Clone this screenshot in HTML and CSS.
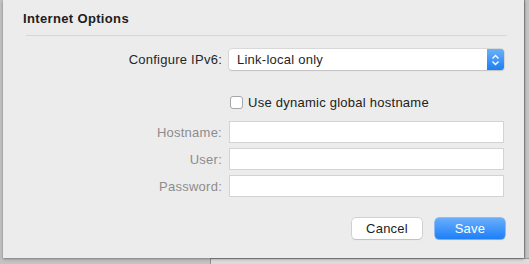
FILE: index.html
```html
<!DOCTYPE html>
<html lang="en">
  <head>
    <meta charset="UTF-8" />
    <meta name="viewport" content="width=device-width, initial-scale=1.0" />
    <title>Internet Options</title>
    <link rel="stylesheet" href="styles.css">
  </head>
  <body>
    <div class="sheet">
      <h1 class="title">Internet Options</h1>
      <div class="rule"></div>

      <div class="row first">
        <label class="label dark">Configure IPv6:</label>
        <div class="select">
          <span class="select-text">Link-local only</span>
          <span class="stepper">
            <svg width="9" height="12" viewBox="0 0 9 12">
              <path d="M1.5 4.5 L4.5 1.5 L7.5 4.5" fill="none" stroke="#fff" stroke-width="1.4" />
              <path d="M1.5 7.5 L4.5 10.5 L7.5 7.5" fill="none" stroke="#fff" stroke-width="1.4" />
            </svg>
          </span>
        </div>
      </div>

      <div class="row check-row">
        <span></span>
        <label class="check"><span class="box"></span>Use dynamic global hostname</label>
      </div>

      <div class="fields">
        <div class="row">
          <label class="label">Hostname:</label>
          <input class="field" type="text" />
        </div>
        <div class="row">
          <label class="label">User:</label>
          <input class="field" type="text" />
        </div>
        <div class="row">
          <label class="label">Password:</label>
          <input class="field" type="password" />
        </div>
      </div>

      <div class="buttons">
        <button class="btn" type="button">Cancel</button>
        <button class="btn primary" type="button">Save</button>
      </div>
    </div>
    <div class="behind"></div>
  </body>
</html>
```

FILE: styles.css
```css
* {
  padding: 0;
  margin: 0;
  box-sizing: border-box;
}
body {
  width: 529px;
  height: 264px;
  overflow: hidden;
  background: #c3c3c3;
  font-family: "Liberation Sans", Arial, sans-serif;
  font-size: 13px;
  letter-spacing: 0.25px;
  color: #222;
}

.sheet {
  width: 521px;
  height: 258px;
  margin-left: 3px;
  padding: 11px 19px 0 20px;
  background: #ececec;
  box-shadow: 0 1px 3px rgba(0, 0, 0, 0.35), 1px 0 1px rgba(0, 0, 0, 0.25);
  position: relative;
  z-index: 1;
}
.title {
  font-size: 13px;
  line-height: 16px;
  font-weight: bold;
  letter-spacing: 0.35px;
  color: #1d1d1d;
}
.rule {
  height: 1px;
  margin: 8px -2px 0 3px;
  background: #d6d6d6;
}

.row {
  display: grid;
  grid-template-columns: 199px 275px;
  column-gap: 7px;
  align-items: center;
}
.row.first {
  margin-top: 13px;
}
.label {
  text-align: right;
  color: #8c8c8c;
}
.label.dark {
  color: #262626;
}

.select {
  height: 21px;
  display: flex;
  align-items: center;
  background: #fff;
  border-radius: 3px;
  box-shadow: 0 0 0 0.5px #c4c4c4, 0 1px 1px rgba(0, 0, 0, 0.18);
}
.select-text {
  flex: 1;
  padding-left: 8px;
  color: #1f1f1f;
}
.stepper {
  width: 17px;
  height: 21px;
  display: flex;
  align-items: center;
  justify-content: center;
  border-radius: 0 3px 3px 0;
  background: linear-gradient(#6ab0fb, #1b7ff7);
}

.check-row {
  margin-top: 25px;
  height: 14px;
}
.check {
  display: flex;
  align-items: center;
  color: #222;
}
.box {
  width: 13px;
  height: 13px;
  margin: 0 5px 0 1px;
  background: #fff;
  border: 1px solid #a6a6a6;
  border-radius: 3px;
}

.fields {
  margin-top: 12px;
  display: flex;
  flex-direction: column;
  gap: 5px;
}
.field {
  height: 22px;
  width: 275px;
  background: #fff;
  border: 1px solid #d3d3d3;
  outline: none;
}

.buttons {
  margin-top: 21px;
  display: flex;
  justify-content: flex-end;
  gap: 13px;
}
.btn {
  width: 70px;
  height: 21px;
  font-family: "Liberation Sans", Arial, sans-serif;
  font-size: 13px;
  letter-spacing: 0.25px;
  color: #222;
  background: #fff;
  border: none;
  border-radius: 4px;
  box-shadow: 0 0 0 0.5px #b8b8b8, 0 1px 1px rgba(0, 0, 0, 0.15);
}
.btn.primary {
  color: #fff;
  background: linear-gradient(#69aefb, #1d7ff7);
  box-shadow: 0 0 0 0.5px #3c8ef6, 0 1px 1px rgba(0, 0, 0, 0.15);
}

.behind {
  height: 8px;
  margin-left: 210px;
  background: #dcdcdc;
  border-left: 1px solid #8f8f8f;
  border-top: 1px solid #9a9a9a;
}
```
